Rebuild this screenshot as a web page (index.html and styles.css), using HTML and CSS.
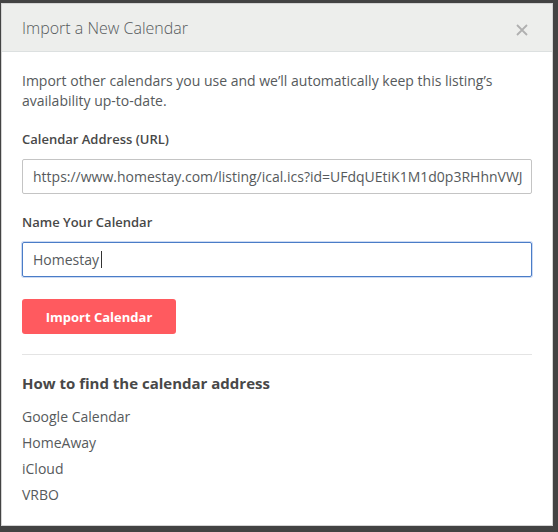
FILE: index.html
```html
<!DOCTYPE html>
<html>
<head>
<meta charset="utf-8">
<link rel="stylesheet" href="styles.css">
</head>
<body>
<div class="modal">
  <div class="modal-header">
    <h1 class="modal-title">Import a New Calendar</h1>
    <span class="close">
      <svg width="12" height="12" viewBox="0 0 12 12"><path d="M1 1L11 11M11 1L1 11" stroke="#b0b0b0" stroke-width="1.8" fill="none"/></svg>
    </span>
  </div>
  <div class="modal-body">
    <p class="intro">Import other calendars you use and we’ll automatically keep this listing’s availability up-to-date.</p>
    <label class="label">Calendar Address (URL)</label>
    <div class="input">https://www.homestay.com/listing/ical.ics?id=UFdqUEtiK1M1d0p3RHhnVWJ</div>
    <label class="label">Name Your Calendar</label>
    <div class="input focused">Homestay<span class="caret"></span></div>
    <button class="btn">Import Calendar</button>
    <hr class="divider">
    <h2 class="subhead">How to find the calendar address</h2>
    <ul class="links">
      <li>Google Calendar</li>
      <li>HomeAway</li>
      <li>iCloud</li>
      <li>VRBO</li>
    </ul>
  </div>
</div>
</body>
</html>
```
FILE: styles.css
```css
* { box-sizing: border-box; }
html, body { margin: 0; padding: 0; }
body {
  background: #434343;
  font-family: "Open Sans", Lato, sans-serif;
  color: #565a5c;
  height: 532px;
  overflow: hidden;
}
.modal {
  margin: 3px 0 0 1px;
  width: 552px;
  height: 523px;
  background: #fff;
  border: 1px solid #d4d4d4;
  display: flex;
  flex-direction: column;
}
.modal-header {
  height: 48px;
  background: #edeeec;
  border-bottom: 1px solid #dce0e0;
  display: flex;
  align-items: center;
  justify-content: space-between;
  padding: 0 24px 0 20px;
  flex: none;
}
.modal-title {
  margin: 0;
  font-size: 16px;
  font-weight: 300;
  color: #565a5c;
}
.close { display: flex; margin-top: 4px; }
.modal-body {
  padding: 19px 20px 0 20px;
  display: flex;
  flex-direction: column;
}
.intro {
  margin: 0;
  font-size: 14px;
  line-height: 20px;
  color: #565a5c;
}
.label {
  display: block;
  font-size: 13px;
  font-weight: 600;
  color: #484848;
  margin-top: 18px;
  line-height: 20px;
}
.input {
  margin-top: 10px;
  height: 35px;
  border: 1px solid #c4c4c4;
  border-radius: 2px;
  padding: 0 10px;
  display: flex;
  align-items: center;
  font-size: 14px;
  color: #565a5c;
  white-space: nowrap;
  overflow: hidden;
}
.input.focused {
  border-color: #4a7cc7;
  box-shadow: 0 0 0 1px rgba(110,150,220,0.35);
}
.caret {
  display: inline-block;
  width: 1px;
  height: 17px;
  background: #333;
  margin-left: 2px;
}
.btn {
  align-self: flex-start;
  margin-top: 22px;
  width: 154px;
  height: 35px;
  border: none;
  border-radius: 3px;
  background: #ff5a5f;
  color: #fff;
  font-family: inherit;
  font-size: 13px;
  font-weight: 700;
}
.divider {
  margin: 20px 0 0;
  border: none;
  border-top: 1px solid #e4e4e4;
}
.subhead {
  margin: 17px 0 0;
  font-size: 15px;
  font-weight: 700;
  color: #484848;
  line-height: 22px;
}
.links {
  list-style: none;
  margin: 10px 0 0;
  padding: 0;
}
.links li {
  font-size: 14px;
  line-height: 26px;
  color: #565a5c;
}
```
